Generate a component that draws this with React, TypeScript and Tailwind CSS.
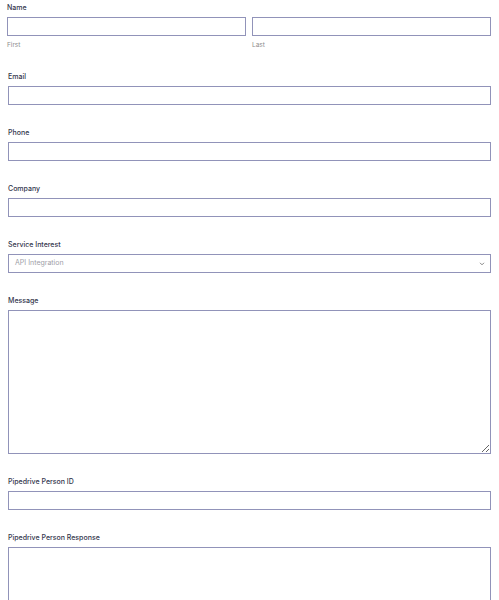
import React from "react";

const ff = { fontFamily: "Inter, 'Liberation Sans', sans-serif" };

// champ simple : libellé + contrôle
function Champ({ label, children }: { label: string; children: React.ReactNode }) {
  return (
    <div>
      <label className="block text-[7px] leading-[10px] font-medium text-[#33364c] mb-[4px]">{label}</label>
      {children}
    </div>
  );
}

const boxCls = "block w-full h-[19px] border border-[#9193b9] bg-white px-[6px] text-[7px] outline-none rounded-none";

export default function App() {
  return (
    <div style={ff} className="h-[600px] overflow-hidden bg-white pl-[8px] pr-[8px] pt-[3px]">
      <div className="flex flex-col gap-[23px]">
        {/* Nom : prénom + nom de famille */}
        <div className="-ml-[1px]">
          <div className="text-[7px] leading-[10px] font-medium text-[#33364c] mb-[4px]">Name</div>
          <div className="flex gap-[6px]">
            <div className="flex-1">
              <input className={`${boxCls} text-[#333]`} />
              <div className="text-[6.5px] leading-[10px] text-[#8d8d8d] mt-[3px] pt-[1px] h-[10px]">First</div>
            </div>
            <div className="flex-1">
              <input className={`${boxCls} text-[#333]`} />
              <div className="text-[6.5px] leading-[10px] text-[#8d8d8d] mt-[3px] pt-[1px] h-[10px]">Last</div>
            </div>
          </div>
        </div>

        <Champ label="Email"><input className={`${boxCls} text-[#333]`} /></Champ>
        <Champ label="Phone"><input className={`${boxCls} text-[#333]`} /></Champ>
        <Champ label="Company"><input className={`${boxCls} text-[#333]`} /></Champ>

        <Champ label="Service Interest">
          <div className="relative">
            <div className={`${boxCls} flex items-center text-[#a0a0a8]`}>API Integration</div>
            <svg className="absolute right-[6px] top-[8px]" width="6" height="4" viewBox="0 0 6 4" fill="none">
              <path d="M1 0.8 L3 2.8 L5 0.8" stroke="#777" strokeWidth="0.9" />
            </svg>
          </div>
        </Champ>

        <Champ label="Message">
          <textarea className="block w-full h-[144px] border border-[#9193b9] bg-white outline-none rounded-none" />
        </Champ>

        <Champ label="Pipedrive Person ID"><input className={`${boxCls} text-[#333]`} /></Champ>

        <Champ label="Pipedrive Person Response">
          <textarea className="block w-full h-[144px] border border-[#9193b9] bg-white outline-none rounded-none" />
        </Champ>
      </div>
    </div>
  );
}
